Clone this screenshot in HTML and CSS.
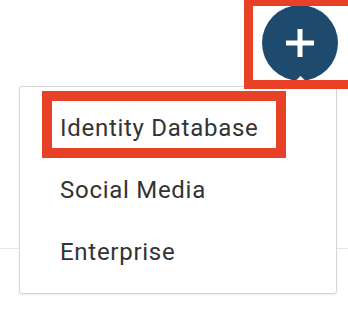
FILE: index.html
```html
<!DOCTYPE html>
<html>
<head>
<meta charset="utf-8">
<link rel="stylesheet" href="styles.css">
</head>
<body>
<div class="page">
  <header class="top">
    <button class="fab" aria-label="Add">
      <svg width="28" height="28" viewBox="0 0 28 28"><path d="M14 0v28M0 14h28" stroke="#fff" stroke-width="5" fill="none"/></svg>
    </button>
  </header>
  <div class="content"></div>
  <ul class="menu">
    <li class="item">Identity Database</li>
    <li class="item">Social Media</li>
    <li class="item">Enterprise</li>
  </ul>
  <div class="mark mark-fab"></div>
  <div class="mark mark-item"></div>
</div>
</body>
</html>
```

FILE: styles.css
```css
html, body {
  margin: 0;
  padding: 0;
  background: #fff;
}
.page {
  position: relative;
  width: 348px;
  height: 310px;
  overflow: hidden;
  font-family: Roboto, "Liberation Sans", sans-serif;
}
.top {
  height: 249px;
  box-sizing: border-box;
  display: flex;
  justify-content: flex-end;
  align-items: flex-start;
  padding: 5px 10px 0 0;
  border-bottom: 1px solid #e6e6e6;
}
.fab {
  width: 76px;
  height: 76px;
  border-radius: 50%;
  border: 0;
  padding: 0;
  background: #1e4a6d;
  display: flex;
  align-items: center;
  justify-content: center;
}
.menu {
  position: absolute;
  left: 19px;
  top: 86px;
  width: 318px;
  height: 208px;
  box-sizing: border-box;
  margin: 0;
  padding: 10px 0;
  list-style: none;
  background: #fff;
  border: 1px solid #d6d6d6;
  border-radius: 3px;
  box-shadow: 0 1px 2px rgba(0,0,0,0.08);
}
.menu::before {
  content: "";
  position: absolute;
  top: -8px;
  left: 273px;
  width: 14px;
  height: 14px;
  background: #fff;
  border-top: 1px solid #d6d6d6;
  border-left: 1px solid #d6d6d6;
  transform: rotate(45deg);
}
.item {
  position: relative;
  height: 62px;
  line-height: 62px;
  padding-left: 40px;
  font-size: 24px;
  color: #333;
  letter-spacing: 0.72px;
}
.mark {
  position: absolute;
  box-sizing: border-box;
  border: 9px solid #e94128;
}
.mark-fab {
  left: 244px;
  top: -3px;
  width: 113px;
  height: 92px;
}
.mark-item {
  left: 42px;
  top: 91px;
  width: 244px;
  height: 67px;
  border-width: 10px;
}
```
